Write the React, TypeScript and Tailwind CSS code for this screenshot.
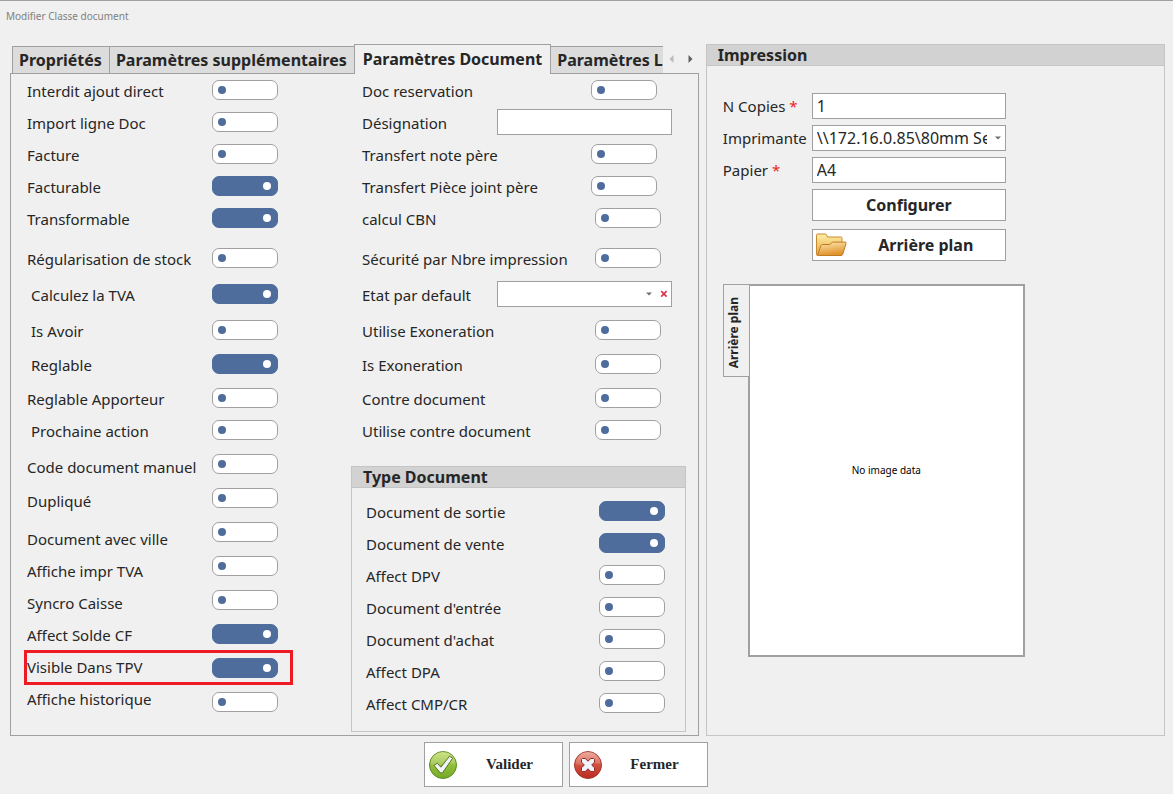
import { useState, type ReactNode } from "react";

type Field = {
  id: string;
  label: string;
  on?: boolean;
  labelH: string;
  controlH: string;
  indent?: boolean;
  kind?: "text" | "select";
  align?: string;
};

const generalFields: Field[] = [
  { id: "interdit", label: "Interdit ajout direct", labelH: "h-7", controlH: "h-7" },
  { id: "import", label: "Import ligne Doc", labelH: "h-8", controlH: "h-8" },
  { id: "facture", label: "Facture", labelH: "h-8", controlH: "h-8" },
  { id: "facturable", label: "Facturable", on: true, labelH: "h-8", controlH: "h-8" },
  { id: "transformable", label: "Transformable", on: true, labelH: "h-8", controlH: "h-8" },
  { id: "regularisation", label: "Régularisation de stock", labelH: "h-10", controlH: "h-10" },
  { id: "tva", label: "Calculez la TVA", on: true, indent: true, labelH: "h-9", controlH: "h-9" },
  { id: "avoir", label: "Is Avoir", indent: true, labelH: "h-9", controlH: "h-9" },
  { id: "reglable", label: "Reglable", on: true, indent: true, labelH: "h-[34px]", controlH: "h-[34px]" },
  { id: "apporteur", label: "Reglable Apporteur", labelH: "h-[34px]", controlH: "h-[34px]" },
  { id: "prochaine", label: "Prochaine action", indent: true, labelH: "h-8", controlH: "h-8" },
  { id: "manuel", label: "Code document manuel", labelH: "h-9", controlH: "h-[34px]" },
  { id: "duplique", label: "Dupliqué", labelH: "h-[34px]", controlH: "h-[34px]" },
  { id: "ville", label: "Document avec ville", labelH: "h-[38px]", controlH: "h-[34px]" },
  { id: "impr-tva", label: "Affiche impr TVA", labelH: "h-8", controlH: "h-[34px]" },
  { id: "caisse", label: "Syncro Caisse", labelH: "h-8", controlH: "h-[34px]" },
  { id: "solde", label: "Affect Solde CF", on: true, labelH: "h-8", controlH: "h-[34px]" },
  { id: "tpv", label: "Visible Dans TPV", on: true, labelH: "h-8", controlH: "h-[34px]" },
  { id: "historique", label: "Affiche historique", labelH: "h-8", controlH: "h-[34px]" },
];

const documentFields: Field[] = [
  { id: "reservation", label: "Doc reservation", labelH: "h-7", controlH: "h-7", align: "pr-[15px]" },
  { id: "designation", label: "Désignation", kind: "text", labelH: "h-8", controlH: "h-8" },
  { id: "note-pere", label: "Transfert note père", labelH: "h-8", controlH: "h-8", align: "pr-[15px]" },
  { id: "piece-pere", label: "Transfert Pièce joint père", labelH: "h-8", controlH: "h-8", align: "pr-[15px]" },
  { id: "cbn", label: "calcul CBN", labelH: "h-8", controlH: "h-8", align: "pr-[11px]" },
  { id: "securite", label: "Sécurité par Nbre impression", labelH: "h-10", controlH: "h-10", align: "pr-[11px]" },
  { id: "etat", label: "Etat par default", kind: "select", labelH: "h-9", controlH: "h-9" },
  { id: "exoneration", label: "Utilise Exoneration", labelH: "h-9", controlH: "h-9", align: "pr-[11px]" },
  { id: "is-exoneration", label: "Is Exoneration", labelH: "h-[34px]", controlH: "h-[34px]", align: "pr-[11px]" },
  { id: "contre", label: "Contre document", labelH: "h-[34px]", controlH: "h-[34px]", align: "pr-[11px]" },
  { id: "utilise-contre", label: "Utilise contre document", labelH: "h-8", controlH: "h-8", align: "pr-[11px]" },
];

const typeFields: Field[] = [
  { id: "sortie", label: "Document de sortie", on: true, labelH: "h-8", controlH: "h-8" },
  { id: "vente", label: "Document de vente", on: true, labelH: "h-8", controlH: "h-8" },
  { id: "dpv", label: "Affect DPV", labelH: "h-8", controlH: "h-8" },
  { id: "entree", label: "Document d'entrée", labelH: "h-8", controlH: "h-8" },
  { id: "achat", label: "Document d'achat", labelH: "h-8", controlH: "h-8" },
  { id: "dpa", label: "Affect DPA", labelH: "h-8", controlH: "h-8" },
  { id: "cmp", label: "Affect CMP/CR", labelH: "h-8", controlH: "h-8" },
];

function Toggle({ id, on = false }: { id: string; on?: boolean }) {
  const [checked, setChecked] = useState(on);
  return (
    <input
      id={id}
      type="checkbox"
      role="switch"
      checked={checked}
      onChange={(e) => setChecked(e.target.checked)}
      className="flex h-5 w-[66px] appearance-none items-center rounded-[7px] border border-[#a0a0a0] bg-white px-[5px] before:size-2 before:rounded-full before:bg-[#4f6d9c] checked:justify-end checked:border-[#4f6d9c] checked:bg-[#4f6d9c] checked:px-1.5 checked:before:bg-white"
    />
  );
}

function Caret() {
  return (
    <svg width="6" height="4" viewBox="0 0 6 4" aria-hidden="true">
      <path d="M0 0.5h6L3 3.5z" fill="#6e6e6e" />
    </svg>
  );
}

function Control({ field }: { field: Field }) {
  if (field.kind === "text") {
    return <input id={field.id} type="text" className="h-[26px] w-[175px] border border-[#a0a0a0] bg-white px-1" />;
  }
  if (field.kind === "select") {
    return (
      <div className="relative w-[175px]">
        <select id={field.id} className="block h-[26px] w-full appearance-none border border-[#a0a0a0] bg-white px-1">
          <option></option>
        </select>
        <span className="pointer-events-none absolute inset-y-0 right-5 flex items-center">
          <Caret />
        </span>
        <button type="button" aria-label="Effacer" className="absolute inset-y-0 right-1 flex items-center">
          <svg width="8" height="8" viewBox="0 0 8 8">
            <path d="M1.2 1.2l5.4 5.4M6.6 1.2L1.2 6.6" stroke="#d9364a" strokeWidth="1.7" />
          </svg>
        </button>
      </div>
    );
  }
  return <Toggle id={field.id} on={field.on} />;
}

function FieldList({ fields, highlight }: { fields: Field[]; highlight?: string }) {
  return (
    <div className="grid grid-cols-[minmax(0,1fr)_auto]">
      <div className="flex flex-col pt-px text-[15px]">
        {fields.map((f) => (
          <div key={f.id} className={`relative flex items-end ${f.labelH}`}>
            <label htmlFor={f.id} className={`leading-[26px] whitespace-nowrap ${f.indent ? "pl-1" : ""}`}>
              {f.label}
            </label>
            {highlight === f.id && (
              <span className="pointer-events-none absolute -bottom-[5px] -left-[3px] h-[35px] w-[269px] border-3 border-[#ed1c24]"></span>
            )}
          </div>
        ))}
      </div>
      <div className="flex flex-col">
        {fields.map((f) => (
          <div key={f.id} className={`flex items-end justify-end ${f.controlH} ${f.align ?? ""}`}>
            <div className="flex h-[26px] items-center">
              <Control field={f} />
            </div>
          </div>
        ))}
      </div>
    </div>
  );
}

function Group({ title, children }: { title: string; children: ReactNode }) {
  return (
    <section className="border border-[#c5c5c5]">
      <h2 className="border-b border-[#c5c5c5] bg-[#d2d2d2] px-[11px] leading-5 font-bold">{title}</h2>
      {children}
    </section>
  );
}

function Tab({ label, active = false }: { label: string; active?: boolean }) {
  return (
    <button
      type="button"
      role="tab"
      aria-selected={active}
      className={
        active
          ? "h-[30px] shrink-0 border border-b-0 border-[#a0a0a0] bg-[#f0f0f0] px-2 pb-0.5 font-bold whitespace-nowrap"
          : "h-7 shrink-0 border border-r-0 border-[#a0a0a0] bg-[#dcdcdc] pr-[7px] pl-1.5 font-bold whitespace-nowrap last:border-l-0"
      }
    >
      {label}
    </button>
  );
}

function Star() {
  return <span className="text-[#ed1c24]"> *</span>;
}

function FolderIcon() {
  return (
    <svg width="32" height="26" viewBox="0 0 32 26" aria-hidden="true">
      <defs>
        <linearGradient id="folderBack" x1="0" y1="0" x2="0" y2="1">
          <stop offset="0" stopColor="#fff0a8" />
          <stop offset="1" stopColor="#e5a33a" />
        </linearGradient>
        <linearGradient id="folderFront" x1="0" y1="0" x2="0.3" y2="1">
          <stop offset="0" stopColor="#ffe9b0" />
          <stop offset="1" stopColor="#e0922c" />
        </linearGradient>
      </defs>
      <path
        d="M1.5 22.5V3.2C1.5 2.4 2 2 2.7 2h7.6c.6 0 1 .3 1.2.8L12.5 5h13.3c.8 0 1.2.5 1.2 1.2V14L5 23.5H2.5c-.6 0-1-.4-1-1z"
        fill="url(#folderBack)"
        stroke="#c98a2c"
      />
      <path
        d="M7.6 12.5h6.6c.6 0 1-.2 1.4-.6l1.5-1.4c.3-.3.7-.4 1.1-.4h12c.8 0 1.1.5.9 1.2l-3.4 11c-.2.8-.8 1.2-1.6 1.2H3.5c-.7 0-.9-.5-.7-1.1l3.2-8.8c.2-.7.8-1.1 1.6-1.1z"
        fill="url(#folderFront)"
        stroke="#bf7a22"
      />
    </svg>
  );
}

function CheckIcon() {
  return (
    <svg width="30" height="30" viewBox="0 0 30 30" aria-hidden="true">
      <defs>
        <linearGradient id="okFill" x1="0" y1="0" x2="0" y2="1">
          <stop offset="0" stopColor="#c3dd6a" />
          <stop offset="0.5" stopColor="#93bf3a" />
          <stop offset="1" stopColor="#75a828" />
        </linearGradient>
      </defs>
      <circle cx="15" cy="15" r="13.5" fill="url(#okFill)" stroke="#5c8a22" />
      <path d="M2.5 14a12.5 12.5 0 0 1 25 0c-7-2.5-17 3-25 0z" fill="#fff" opacity="0.18" />
      <path
        d="M6 15.5l3.2-2.3 3.7 4L21.500 6.2l3.200 2-10.200 14.600-2 .2z"
        fill="#f1f4fa"
        stroke="#56741f"
        strokeLinejoin="round"
      />
    </svg>
  );
}

function CloseIcon() {
  return (
    <svg width="30" height="30" viewBox="0 0 30 30" aria-hidden="true">
      <defs>
        <linearGradient id="koFill" x1="0" y1="0" x2="0" y2="1">
          <stop offset="0" stopColor="#e9a08e" />
          <stop offset="0.5" stopColor="#d2503f" />
          <stop offset="1" stopColor="#b92a20" />
        </linearGradient>
      </defs>
      <circle cx="15" cy="15" r="13.5" fill="url(#koFill)" stroke="#a5392f" />
      <path d="M2.5 14a12.5 12.5 0 0 1 25 0c-7-2.5-17 3-25 0z" fill="#fff" opacity="0.15" />
      <path
        d="M9.5 8.5h2.7L15 11.2l2.8-2.7h2.7l1 1v2.7L18.7 15l2.8 2.8v2.7l-1 1h-2.7L15 18.8l-2.8 2.7H9.5l-1-1v-2.7l2.8-2.8-2.8-2.8V9.5z"
        fill="#f1f4fa"
        stroke="#8c2a25"
        strokeLinejoin="round"
      />
    </svg>
  );
}

export default function App() {
  return (
    <main className="min-h-screen border-t border-[#a0a0a0] bg-[#f0f0f0] font-['Noto_Sans',sans-serif] text-[16px] text-[#262626]">
      <h1 className="px-1.5 pt-2 text-[10px] leading-[14px] text-[#808080]">Modifier Classe document</h1>

      <div className="mt-5 grid grid-cols-[3fr_2fr] gap-[7px] pr-2 pl-2.5">
        <div className="flex min-w-0 flex-col">
          <div className="-mb-px flex h-[31px] items-end pl-0.5">
            <div role="tablist" className="relative flex min-w-0 flex-1 items-end overflow-hidden">
              <Tab label="Propriétés" />
              <Tab label="Paramètres supplémentaires" />
              <Tab label="Paramètres Document" active />
              <Tab label="Paramètres L" />
            </div>
            <div className="flex h-full w-9 items-center justify-between px-1.5">
              <button type="button" aria-label="Onglet précédent">
                <svg width="5" height="8" viewBox="0 0 5 8">
                  <path d="M4.5 0v8L0.5 4z" fill="#bcbcbc" />
                </svg>
              </button>
              <button type="button" aria-label="Onglet suivant">
                <svg width="5" height="8" viewBox="0 0 5 8">
                  <path d="M0.5 0v8l4-4z" fill="#5f5f5f" />
                </svg>
              </button>
            </div>
          </div>

          {/* Onglet Paramètres Document */}
          <div className="grid flex-1 grid-cols-[251px_minmax(0,1fr)] gap-[73px] border border-[#a0a0a0] pt-px pr-3 pb-[3px] pl-4">
            <FieldList fields={generalFields} highlight="tpv" />
            <div>
              <div className="pr-3.5 pl-[11px]">
                <FieldList fields={documentFields} />
              </div>
              <div className="mt-[22px]">
                <Group title="Type Document">
                  <div className="pt-1 pr-5 pb-3.5 pl-3.5">
                    <FieldList fields={typeFields} />
                  </div>
                </Group>
              </div>
            </div>
          </div>
        </div>

        <div className="grid pt-px">
          <Group title="Impression">
            <div className="px-4 pt-[27px]">
              <div className="grid grid-cols-[89px_194px] gap-y-1.5">
                <label htmlFor="copies" className="text-[15px] leading-[26px]">
                  N Copies
                  <Star />
                </label>
                <input id="copies" type="text" defaultValue="1" className="h-[26px] border border-[#a0a0a0] bg-white px-1" />
                <label htmlFor="imprimante" className="text-[15px] leading-[26px]">
                  Imprimante
                </label>
                <div className="relative">
                  <select
                    id="imprimante"
                    className="block h-[26px] w-full appearance-none border border-[#a0a0a0] bg-white pr-[18px] pl-1"
                  >
                    <option>{"\\\\172.16.0.85\\80mm Series"}</option>
                  </select>
                  <span className="pointer-events-none absolute inset-y-0 right-[5px] flex items-center">
                    <Caret />
                  </span>
                </div>
                <label htmlFor="papier" className="text-[15px] leading-[26px]">
                  Papier
                  <Star />
                </label>
                <input id="papier" type="text" defaultValue="A4" className="h-[26px] border border-[#a0a0a0] bg-white px-1" />
                <div className="col-start-2 flex flex-col gap-2">
                  <button type="button" className="h-8 border border-[#a0a0a0] bg-white font-bold">
                    Configurer
                  </button>
                  <button type="button" className="flex h-8 items-center border border-[#a0a0a0] bg-white pl-0.5 font-bold">
                    <FolderIcon />
                    <span className="flex-1">Arrière plan</span>
                  </button>
                </div>
              </div>

              <div className="mt-[23px] flex items-start">
                <div className="relative -mr-0.5 flex h-[93px] w-[27px] items-center justify-center border border-[#a0a0a0] bg-[#f0f0f0] pt-1 pr-1">
                  <span className="rotate-180 text-[12px] leading-4 font-bold whitespace-nowrap [writing-mode:vertical-rl]">
                    Arrière plan
                  </span>
                </div>
                <div className="flex h-[373px] w-[277px] items-center justify-center border-2 border-[#a0a0a0] bg-white text-[10px] text-black">
                  No image data
                </div>
              </div>
            </div>
          </Group>
        </div>
      </div>

      <div className="mt-1.5 flex justify-center gap-1.5 pr-[42px] pb-1.5 font-['Liberation_Serif',serif] text-[15px] font-bold">
        <button type="button" className="flex h-[45px] w-[139px] items-center border border-[#a0a0a0] bg-white pl-[3px]">
          <CheckIcon />
          <span className="flex-1">Valider</span>
        </button>
        <button type="button" className="flex h-[45px] w-[139px] items-center border border-[#a0a0a0] bg-white pl-[3px]">
          <CloseIcon />
          <span className="flex-1">Fermer</span>
        </button>
      </div>
    </main>
  );
}
